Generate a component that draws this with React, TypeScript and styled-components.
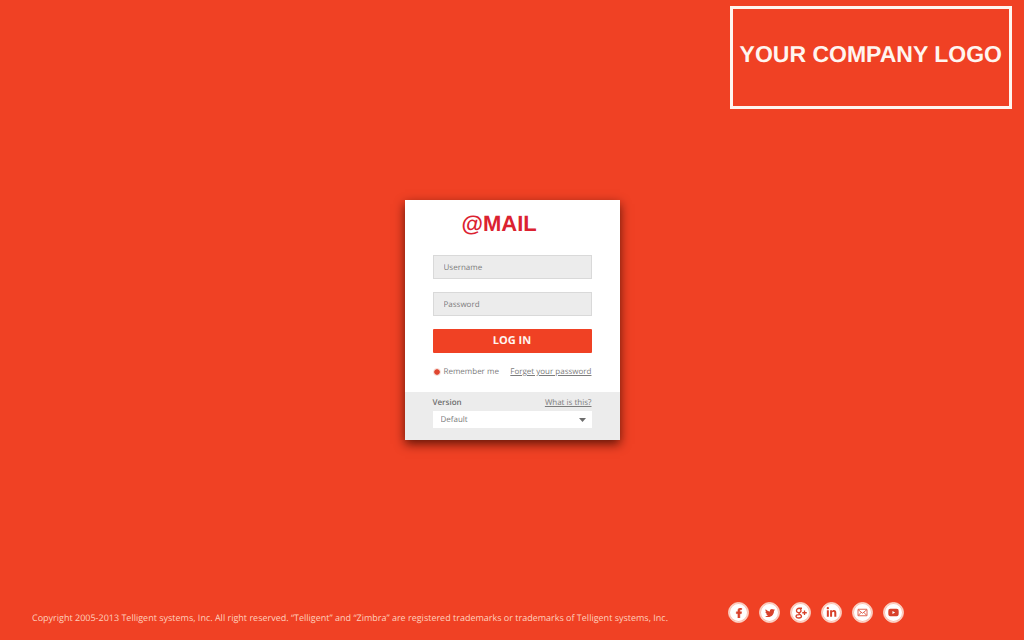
import React from "react";
import styled, { createGlobalStyle } from "styled-components";
import { FaFacebookF, FaTwitter, FaLinkedinIn, FaYoutube } from "react-icons/fa";

const RED = "#f04124";

const GlobalStyle = createGlobalStyle`
  *, *::before, *::after { box-sizing: border-box; }
  body {
    margin: 0;
    background: ${RED};
    font-family: "Open Sans", sans-serif;
    text-rendering: geometricPrecision;
  }
`;

const Page = styled.div`
  min-height: 100vh;
  display: grid;
  grid-template-rows: 1fr auto 1fr;
  background: ${RED};
`;

const Header = styled.header`
  display: flex;
  justify-content: flex-end;
  align-items: flex-start;
  padding: 6px 12px 0;
`;

const CompanyLogo = styled.div`
  border: 3px solid #fff5f0;
  padding: 32px 7px 38px;
  color: #fff5f0;
  font: bold 23px/27px "Liberation Sans", Arial, sans-serif;
  white-space: nowrap;
`;

const Card = styled.main`
  width: 215px;
  justify-self: center;
  background: #fff;
  box-shadow: 0 4px 10px rgba(60, 10, 0, 0.8);
`;

const Form = styled.form`
  margin: 0;
`;

const Section = styled.div`
  display: flex;
  flex-direction: column;
  gap: 13px;
  padding: 11px 28px 14px;
`;

const Title = styled.h1`
  margin: 0 0 5px;
  padding-left: 29px;
  color: #db2230;
  font: bold 22px/26px "Liberation Sans", Arial, sans-serif;
`;

const Field = styled.input`
  width: 100%;
  height: 24px;
  padding: 0 10px;
  border: 1px solid #d9d9d9;
  border-radius: 0;
  background: #ececec;
  color: #7c7c7c;
  font: 8px/12px "Open Sans", sans-serif;
  text-rendering: inherit;
  outline: none;
  &::placeholder { color: #7c7c7c; opacity: 1; }
`;

const LoginButton = styled.button`
  height: 24px;
  padding: 0;
  border: 0;
  border-radius: 1px;
  background: ${RED};
  color: #fff5f0;
  font: 700 11px/16px "Open Sans", sans-serif;
  text-rendering: inherit;
  cursor: pointer;
`;

const Row = styled.div`
  display: flex;
  justify-content: space-between;
  align-items: center;
  color: #7c7c7c;
  font-size: 8px;
  line-height: 12px;
  white-space: nowrap;
`;

const Remember = styled.label`
  display: flex;
  align-items: center;
  gap: 3px;
`;

const Tick = styled.input`
  appearance: none;
  width: 8px;
  height: 8px;
  margin: 0;
  border: 1px solid #f6dcd6;
  border-radius: 50%;
  background: #fff;
  background-clip: padding-box;
  &:checked { background-color: #e0452f; }
`;

const TextLink = styled.a`
  color: #7c7c7c;
  text-decoration: underline;
`;

const VersionSection = styled.div`
  display: flex;
  flex-direction: column;
  gap: 2px;
  padding: 5px 28px 12px;
  background: #ececec;
`;

const VersionLabel = styled.label`
  color: #6c6c6c;
  font-weight: 600;
`;

const SelectBox = styled.div`
  display: grid;
  align-items: center;
  background: #fff;
  & > * { grid-area: 1 / 1; }
  & > svg { justify-self: end; margin-right: 6px; pointer-events: none; }
`;

const Select = styled.select`
  appearance: none;
  width: 100%;
  height: 17px;
  padding: 0 8px;
  border: 0;
  border-radius: 0;
  background: transparent;
  color: #7c7c7c;
  font: 8px/12px "Open Sans", sans-serif;
  text-rendering: inherit;
`;

const Footer = styled.footer`
  display: flex;
  justify-content: space-between;
  align-items: flex-end;
  gap: 24px;
  padding: 0 120px 17px 32px;
`;

const Copyright = styled.p`
  margin: 0;
  color: #ffd0bd;
  font-size: 9px;
  line-height: 10px;
`;

const Social = styled.nav`
  display: flex;
  gap: 10px;
`;

const SocialLink = styled.a`
  display: flex;
  align-items: center;
  justify-content: center;
  width: 21px;
  height: 21px;
  border: 1px solid #fbc4b4;
  border-radius: 50%;
  background: #fff;
  box-shadow: inset 0 0 0 1px #fbc0b0;
  color: #d8412b;
`;

const FacebookIcon = styled(FaFacebookF)`
  stroke: currentColor;
  stroke-width: 24px;
`;

const GooglePlusIcon = () => (
  <svg width="12" height="12" viewBox="0 0 24 24" fill="none" stroke="currentColor" strokeWidth="2.6" aria-hidden="true">
    <path d="M14 2.5H8.5C5 2.5 3 4.500 3 7s2 4.300 4.500 4.300S12 9.500 12 7 10.500 2.500 8.500 2.500" />
    <path d="M8.500 11.300c-1 1.400-.5 2.200.8 3.100 2 1.300 3.700 2.200 3.700 4.100 0 2.200-2.200 3.500-5.200 3.500S2 20.900 2 18.700s2.500-3.600 7-3.600" />
    <path d="M19 7v9M14.500 11.500h9" />
  </svg>
);

const MailIcon = () => (
  <svg width="11" height="9" viewBox="0 0 22 18" fill="none" stroke="currentColor" strokeWidth="1.600" aria-hidden="true">
    <rect x="2" y="2.500" width="18" height="13" rx="1" />
    <path d="M2.500 3.500 11 10.500l8.500-7M2.500 15l6-6.500M19.500 15l-6-6.500" />
  </svg>
);

const networks = [
  { name: "Facebook", icon: <FacebookIcon size={10} /> },
  { name: "Twitter", icon: <FaTwitter size={10} /> },
  { name: "Google Plus", icon: <GooglePlusIcon /> },
  { name: "LinkedIn", icon: <FaLinkedinIn size={11} /> },
  { name: "Email", icon: <MailIcon /> },
  { name: "YouTube", icon: <FaYoutube size={11} /> },
];

export default function App() {
  return (
    <Page>
      <GlobalStyle />
      <Header>
        <CompanyLogo>YOUR COMPANY LOGO</CompanyLogo>
      </Header>
      <Card>
        <Form onSubmit={(e) => e.preventDefault()}>
          <Section>
            <Title>@MAIL</Title>
            <Field type="text" placeholder="Username" aria-label="Username" />
            <Field type="password" placeholder="Password" aria-label="Password" />
            <LoginButton type="submit">LOG IN</LoginButton>
            <Row>
              <Remember>
                <Tick type="checkbox" defaultChecked />
                Remember me
              </Remember>
              <TextLink href="#forgot">Forget your password</TextLink>
            </Row>
          </Section>
          <VersionSection>
            <Row>
              <VersionLabel htmlFor="version">Version</VersionLabel>
              <TextLink href="#version-help">What is this?</TextLink>
            </Row>
            <SelectBox>
              <Select id="version" defaultValue="Default">
                <option>Default</option>
              </Select>
              <svg width="7" height="4" viewBox="0 0 7 4" aria-hidden="true">
                <path d="M0 0h7L3.500 4z" fill="#6c6c6c" />
              </svg>
            </SelectBox>
          </VersionSection>
        </Form>
      </Card>
      <Footer>
        <Copyright>
          Copyright 2005-2013 Telligent systems, Inc. All right reserved. “Telligent” and “Zimbra” are registered
          trademarks or trademarks of Telligent systems, Inc.
        </Copyright>
        <Social aria-label="Social networks">
          {networks.map((n) => (
            <SocialLink key={n.name} href={"#" + n.name.toLowerCase().replace(" ", "-")} aria-label={n.name}>
              {n.icon}
            </SocialLink>
          ))}
        </Social>
      </Footer>
    </Page>
  );
}
